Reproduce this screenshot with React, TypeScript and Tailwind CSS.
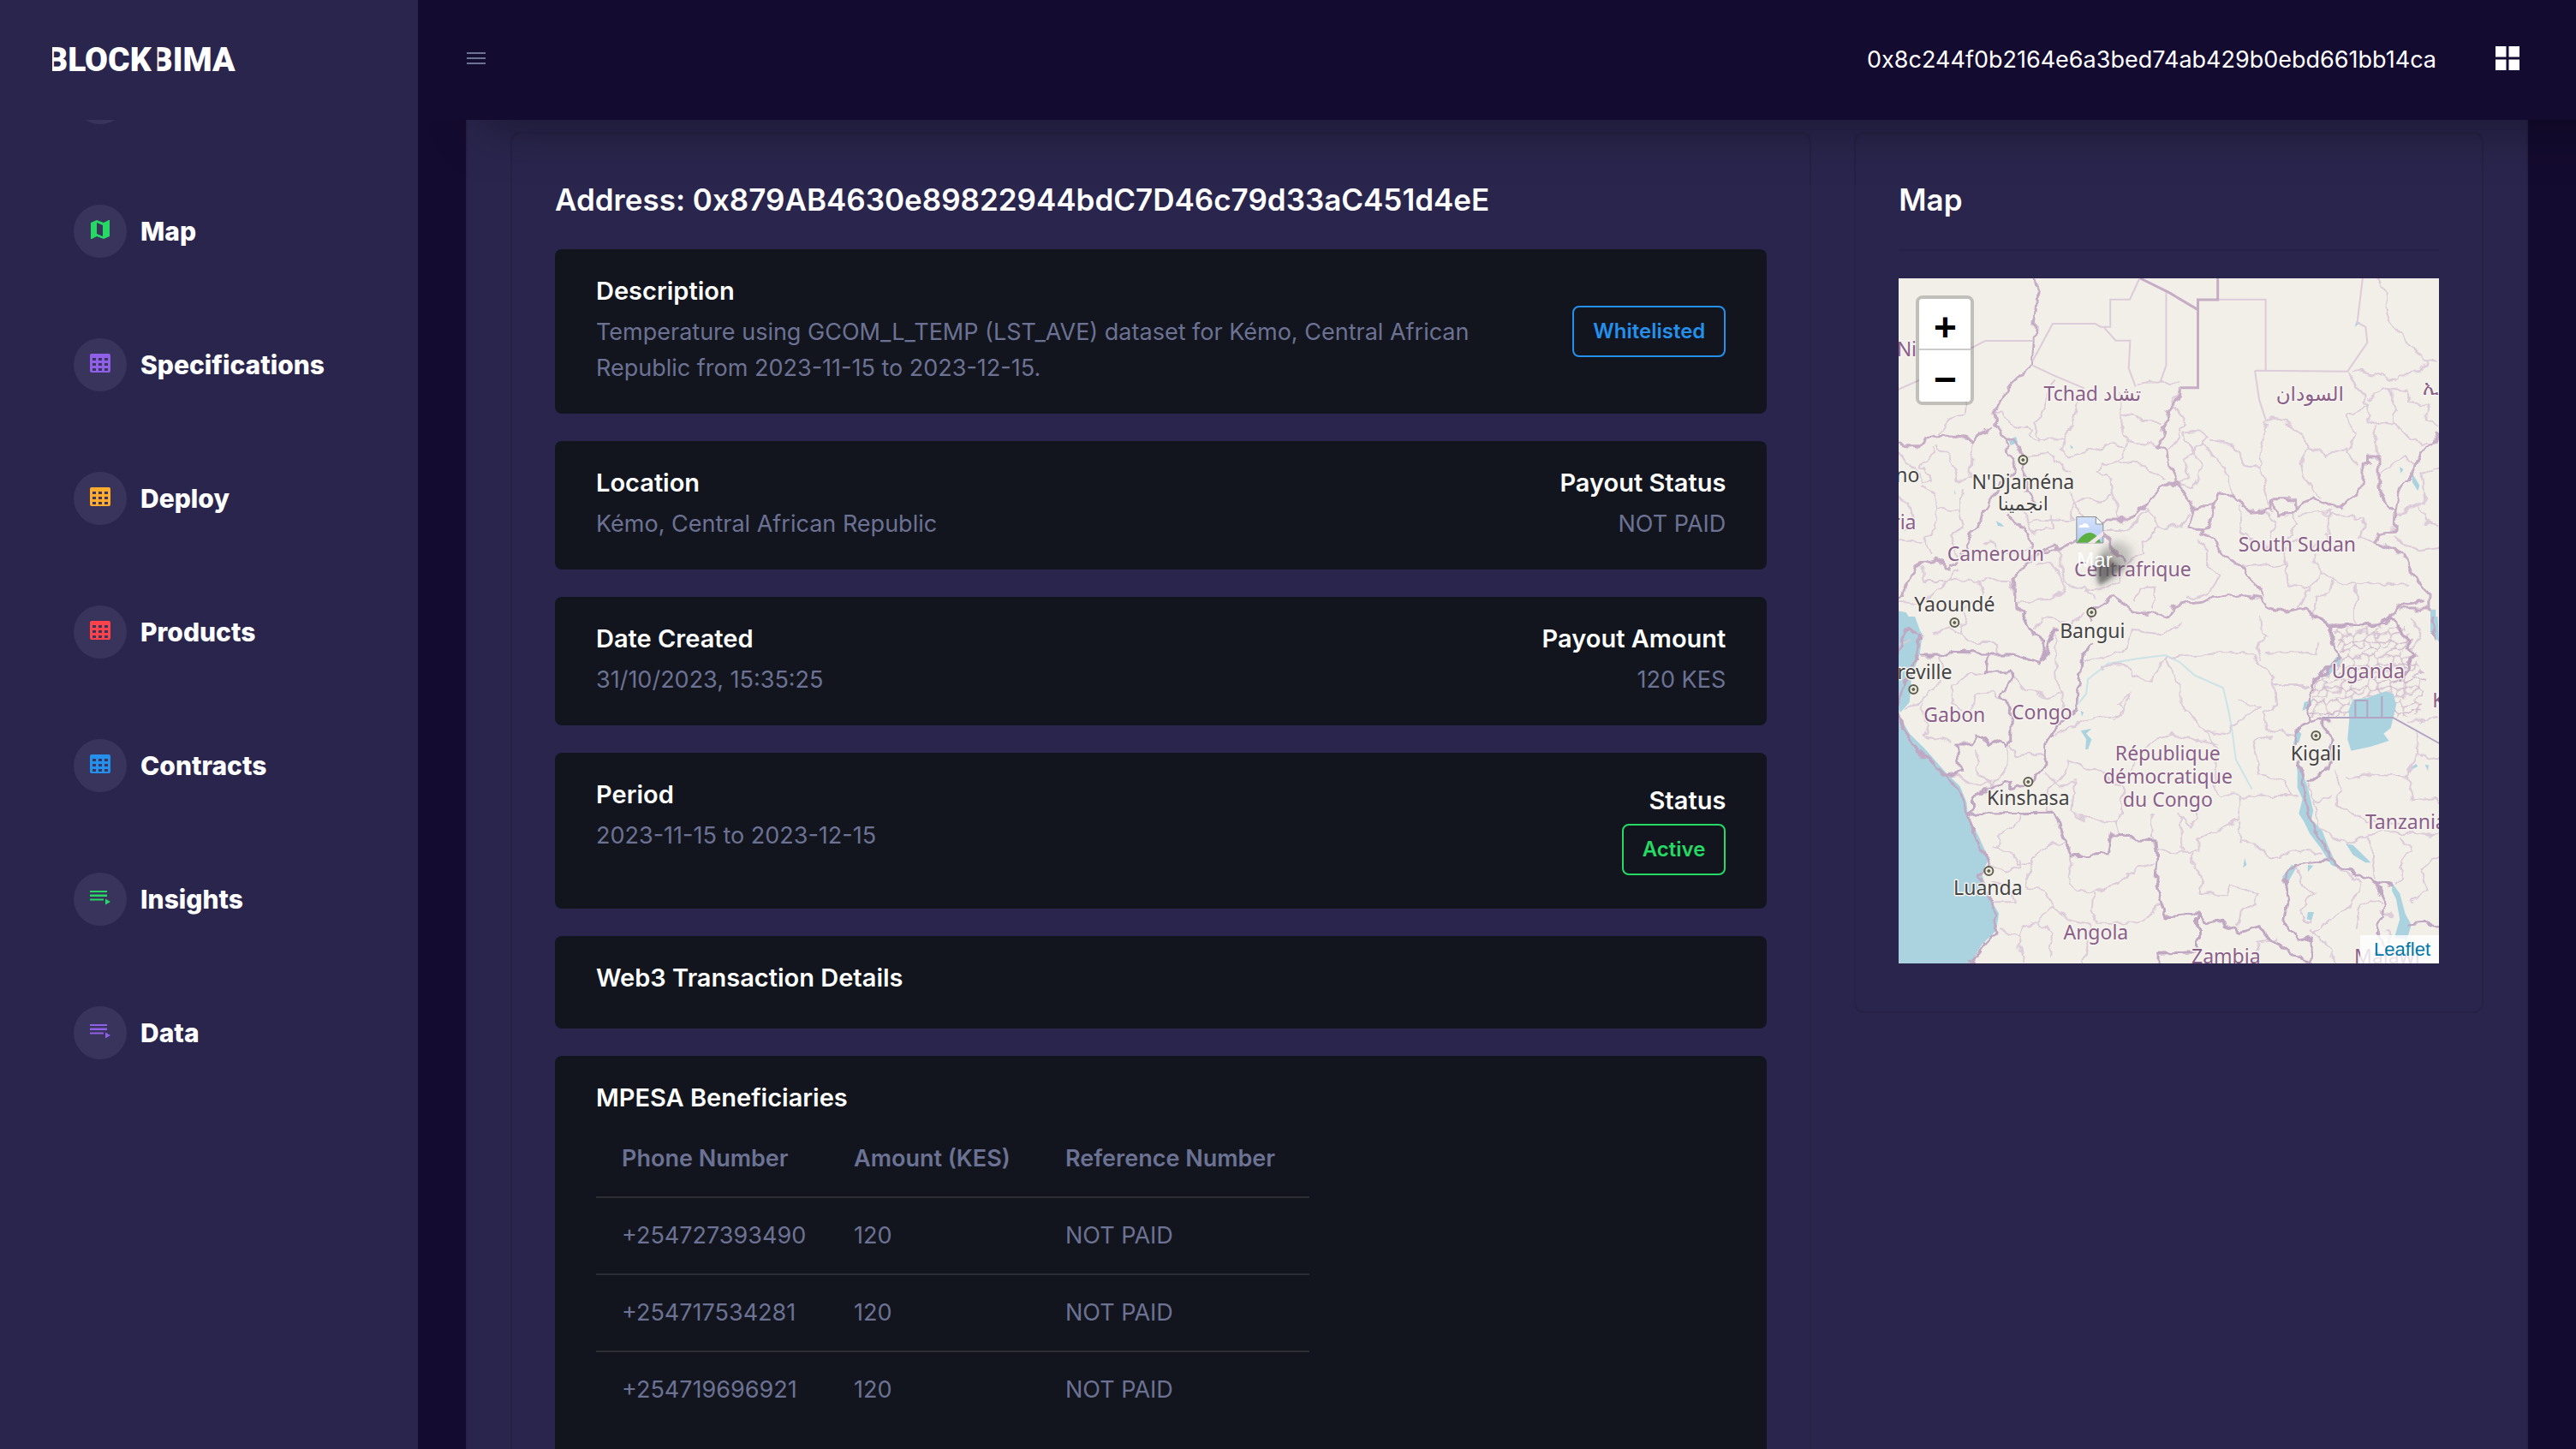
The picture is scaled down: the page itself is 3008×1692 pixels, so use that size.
import React from 'react';

/** Sidebar entries */
const navItems = [
  { label: 'Map', icon: 'map', color: 'text-[#25d964]' },
  { label: 'Specifications', icon: 'table', color: 'text-[#8f5fe8]' },
  { label: 'Deploy', icon: 'table', color: 'text-[#ffab2d]' },
  { label: 'Products', icon: 'table', color: 'text-[#fc424a]' },
  { label: 'Contracts', icon: 'table', color: 'text-[#2490eb]' },
  { label: 'Insights', icon: 'playlist', color: 'text-[#25d964]' },
  { label: 'Data', icon: 'playlist', color: 'text-[#8f5fe8]' },
];

const beneficiaries = [
  { phone: '+254727393490', amount: '120', reference: 'NOT PAID' },
  { phone: '+254717534281', amount: '120', reference: 'NOT PAID' },
  { phone: '+254719696921', amount: '120', reference: 'NOT PAID' },
];

function NavIcon({ name }: { name: string }) {
  if (name === 'map') {
    return (
      <svg viewBox="0 0 24 24" className="mb-1 h-6 w-6" fill="currentColor">
        <path
          fillRule="evenodd"
          d="M1 4 8 1l8 3 6-3h1v19l-7 3-8-3-6 3H1zm7 0v13l7 3V7z"
        />
      </svg>
    );
  }
  if (name === 'table') {
    return (
      <svg viewBox="0 0 24 24" className="mb-1 h-6 w-6" fill="currentColor">
        <path
          fillRule="evenodd"
          d="M2 1h20a2 2 0 0 1 2 2v18a2 2 0 0 1-2 2H2a2 2 0 0 1-2-2V3a2 2 0 0 1 2-2zM3 6v3h4V6zm7 0v3h4V6zm7 0v3h4V6zM3 12v3h4v-3zm7 0v3h4v-3zm7 0v3h4v-3zM3 18v3h4v-3zm7 0v3h4v-3zm7 0v3h4v-3z"
        />
      </svg>
    );
  }
  return (
    <svg viewBox="0 0 24 24" className="mb-1 h-6 w-6" fill="currentColor">
      <path d="M0 4h20v2H0zM0 8.500h20v2.500H0zM0 13.500h16v2H0zM18 13.500l6 3.500-6 3.500z" />
    </svg>
  );
}

function Sidebar() {
  return (
    <aside className="flex w-[488px] shrink-0 flex-col bg-[#2a254d]">
      <div className="flex h-[140px] shrink-0 items-center px-[54px]">
        <a
          href="#home"
          className="font-['Roboto',sans-serif] text-[39px] leading-none font-black text-white"
        >
          <span className="inline-block [clip-path:inset(0_0_0_7px)]">B</span>LOCK
          <span className="inline-block [clip-path:inset(0_0_0_7px)]">B</span>IMA
        </a>
      </div>
      <nav className="flex-1 overflow-hidden">
        <ul className="-mt-[57px] flex flex-col gap-[94px] pl-[86px]">
          <li className="h-[62px]">
            <a
              href="#dashboard"
              aria-label="Dashboard"
              className="block h-[62px] w-[62px] rounded-full bg-[#38345b]"
            />
          </li>
          {navItems.map((item) => (
            <li key={item.label} className="h-[62px]">
              <a href={`#${item.label.toLowerCase()}`} className="flex items-center gap-4">
                <span
                  className={`flex h-[62px] w-[62px] items-center justify-center rounded-full bg-[#38345b] ${item.color}`}
                >
                  <NavIcon name={item.icon} />
                </span>
                <span className="text-[30px] leading-[42px] font-extrabold text-white">
                  {item.label}
                </span>
              </a>
            </li>
          ))}
        </ul>
      </nav>
    </aside>
  );
}

function TopBar() {
  return (
    <header className="relative z-10 flex h-[140px] shrink-0 items-center bg-[#140b30] pr-[66px] pl-[57px] shadow-[75px_10px_60px_rgba(0,0,0,0.35)]">
      <button type="button" aria-label="Toggle menu" className="text-[#6c7293]">
        <svg viewBox="0 0 22 14" className="mb-1 h-[14px] w-[22px]" fill="currentColor">
          <path d="M0 0h22v2H0zM0 6h22v2H0zM0 12h22v2H0z" />
        </svg>
      </button>
      <span className="ml-auto text-[27px] leading-[42px] text-white">
        0x8c244f0b2164e6a3bed74ab429b0ebd661bb14ca
      </span>
      <button type="button" aria-label="Apps" className="ml-[69px] text-white">
        <svg viewBox="0 0 28 28" className="mb-1 h-7 w-7" fill="currentColor">
          <path d="M0 0h12.500v12.500H0zM15.500 0H28v12.500H15.500zM0 15.500h12.500V28H0zM15.500 15.500H28V28H15.500z" />
        </svg>
      </button>
    </header>
  );
}

interface InfoCardProps {
  title: string;
  text?: string;
  children?: React.ReactNode;
}

/** Dark row with a title, its value and an optional right side */
function InfoCard({ title, text, children }: InfoCardProps) {
  return (
    <div className="flex justify-between rounded-lg bg-[#12151e] px-12 py-8">
      <div className="max-w-[1100px]">
        <h6 className="mb-[10px] text-[29px] leading-[34px] font-semibold text-white">{title}</h6>
        {text && <p className="text-[27px] leading-[42px] text-[#6c7293]">{text}</p>}
      </div>
      {children}
    </div>
  );
}

function RightValue({ title, text }: { title: string; text: string }) {
  return (
    <div className="text-right">
      <h6 className="mb-[10px] text-[29px] leading-[34px] font-semibold text-white">{title}</h6>
      <p className="text-[27px] leading-[42px] text-[#6c7293]">{text}</p>
    </div>
  );
}

function BeneficiaryTable() {
  return (
    <table className="text-left text-[27px] leading-[42px] text-[#6c7293]">
      <thead>
        <tr className="border-b-2 border-[#2c2e33]">
          <th className="w-[271px] py-[23px] pr-6 pl-[30px] font-semibold">Phone Number</th>
          <th className="w-[247px] py-[23px] pr-6 pl-[30px] font-semibold">Amount (KES)</th>
          <th className="w-[315px] py-[23px] pr-6 pl-[30px] font-semibold">Reference Number</th>
        </tr>
      </thead>
      <tbody>
        {beneficiaries.map((row) => (
          <tr key={row.phone} className="border-b-2 border-[#2c2e33] last:border-0">
            <td className="py-[23px] pr-6 pl-[30px]">{row.phone}</td>
            <td className="py-[23px] pr-6 pl-[30px]">{row.amount}</td>
            <td className="py-[23px] pr-6 pl-[30px]">{row.reference}</td>
          </tr>
        ))}
      </tbody>
    </table>
  );
}

/* ---- map drawing ---- */

// northern half of the map, in a 1501x1245 grid
const northBorders = [
  'M413 45 415 62 437 95 425 125 418 200 411 345 350 420 320 480 303 518 308 560 335 612 342 660 365 680 360 725 303 800 287 840 270 870 262 910 238 940 228 990 200 1040 185 1068 148 1030 105 1040 60 1105 50 1160 38 1180',
  'M38 620 60 632 98 632 115 608 145 596 190 594 215 600 245 614 265 590 300 570',
  'M335 612 360 612 385 660 390 740 392 790 425 830',
  'M340 870 385 920 410 970 413 1000',
  'M440 1000 470 978 484 995 530 965 610 895 660 893 690 885 750 805 790 762 815 765 855 850 845 915 880 920',
  'M484 995 430 1010 385 1045 358 1100 365 1190 385 1215 415 1300',
  'M855 850 913 842 930 805 970 800 1000 850 1015 862 1075 855 1078 818 1138 818 1140 850 1190 812 1240 845 1270 845 1325 780 1325 695 1345 690 1345 672 1370 672 1370 785 1410 860',
  'M1078 818 1090 872 1130 872 1140 850',
  'M913 842 900 915 880 920 880 940 910 960 940 1010 990 1050 1010 1095 1040 1120 1050 1160',
  'M605 930 640 1000 665 1035',
  'M575 1240 580 1200 630 1163 670 1180 685 1212 735 1220 785 1230 800 1195 880 1180 950 1150 1040 1165 1060 1195 1110 1215 1170 1200 1215 1245 1270 1270 1310 1260 1390 1255 1430 1190 1500 1175',
  'M820 430 815 470 785 510 790 540 770 570 775 600 755 640 785 645 793 710 812 765',
  'M1539 580 1525 630 1490 650 1470 720 1430 780 1418 860 1415 930 1370 940 1360 970 1440 1010 1465 1090 1510 1150 1510 1200 1430 1200',
];

const straightBorders = 'M710 45 790 95 870 155M925 45V120H870V428H820';

const northStraightLines =
  'M38 435 100 400M240 290 280 264H411M411 335 467 204H585L600 215H627V119H681L708 45M610 218 642 263H682L678 360 697 425M782 95V350L765 410M925 119H1058V368M1028 368 1285 371 1340 270 1335 215 1312 200 1327 45M1028 368 1040 470 1058 540M411 350 470 385 555 430';

const northLines = [
  'M1370 45 1390 90 1395 170 1425 240 1500 330 1539 335',
  'M1285 371 1320 440 1340 490 1280 530 1305 590 1285 660 1310 695',
  'M1295 365 1370 385 1425 405 1430 380 1490 375 1505 330',
  'M1340 470 1400 430 1425 500 1410 545 1380 560 1340 540 1340 480',
  'M1400 430 1450 440 1460 480 1510 490 1500 550 1539 560',
  'M1370 680 1360 620 1365 560',
  'M1410 545 1460 610 1525 640',
  'M1058 540 1110 548 1160 590 1180 640 1155 690 1165 750 1215 810',
  'M1180 640 1230 670 1250 650 1285 650',
  'M1058 540 1040 700 1070 840',
  'M1040 705 1000 700 975 640 910 610',
  'M697 425 735 412 820 415',
  'M470 390 445 500 415 550 435 612 500 610 510 570 525 560 540 480',
  'M303 515 325 515 375 570 410 575 400 600 435 615',
  'M38 645 60 690 90 705 105 760 130 755 125 730 105 715 110 690 140 660 135 630',
  'M245 614 240 740 205 760 195 700 180 665 155 650 145 625',
  'M100 770 140 800 150 850 140 930 105 960 130 1010',
  'M150 855 210 858 215 780',
  'M210 858 220 920 185 950 200 1020',
  'M38 810 70 825 80 900 55 930',
  'M38 960 100 970',
  'M658 440 658 550 675 610 760 635',
  'M658 530 685 520 715 545 770 550',
  'M500 610 490 640 515 680 560 650 640 625 665 640 645 690 600 700 590 720 635 745 640 820 650 890',
  'M645 685 720 695 735 720 780 750',
  'M395 665 460 660 500 720 520 725',
  'M665 640 675 615',
  'M820 430 800 480 830 540 820 600 790 640',
  'M815 765 855 780 880 700 830 590',
  'M830 590 860 585 905 595 880 620 940 700 970 800',
  'M885 620 830 680 850 740 812 770',
  'M380 850 395 900 430 890 520 895 520 840 560 810 600 840 640 790',
  'M395 900 410 940 470 920 465 880',
  'M520 800 530 850 560 890',
  'M280 975 300 970 320 1000 385 1005 410 985',
  'M105 1050 110 1110 170 1110 205 1070',
  'M38 1180 100 1190 180 1100 260 1100 350 1105',
  'M265 1105 275 1150 225 1200 215 1290',
  'M350 1105 365 1175 450 1170 490 1150 500 1110 470 1050 430 1040',
  'M484 995 485 1050 510 1120 560 1130 585 1160',
  'M415 1270 440 1230 480 1240 520 1260 560 1220',
  'M730 850 700 900 660 930 610 930',
  'M730 850 765 920 820 910 845 870',
  'M765 920 715 970 720 1010 670 1040',
  'M870 960 900 1000 900 1060 930 1090 900 1150 840 1170',
  'M665 1040 650 1110 630 1130 560 1140',
  'M700 1180 705 1130 750 1130 745 1200',
  'M985 840 990 940 1060 990 1085 900 1060 860',
  'M990 1060 1115 1050 1110 980 1150 900 1135 870',
  'M1150 870 1240 860 1230 940 1180 1000 1150 960 1120 980',
  'M1210 870 1330 880 1320 960 1360 975',
  'M1115 1050 1120 1120 1180 1130 1210 1080 1260 1110 1455 1118',
  'M1210 1080 1190 1020',
  'M1308 1118 1308 1260',
  'M1180 1130 1150 1200',
  'M1250 1110 1240 1150 1200 1160 1190 1240',
  'M1370 740 1410 690 1450 660 1470 710',
  'M1539 700 1490 730 1500 830 1430 870',
  'M1420 870 1480 840 1500 900 1539 910',
  'M1415 950 1480 1000 1539 990',
  'M150 590 180 540 220 520 222 480',
];

// southern half, grid of the same width that starts lower down
const southBorders = [
  'M38 130 60 40 100 65 95 120 60 230 38 310M38 340 70 430 110 490 175 560 215 620 228 690 265 800 290 865 265 905 290 990 312 1050 305 1110 270 1160 240 1215',
  'M100 135 185 135 187 127 290 130 285 195 350 195 355 215 325 270 330 290 352 320 350 430 335 455 320 430 290 450 260 410 247 450 198 450 215 540 175 555',
  'M290 135 360 135 440 165 445 130 470 45 485 45M385-10 400 30 440 90 443 140',
  'M575 90 550 140 540 250 525 330 490 370 470 400 448 440 445 530 405 585 350 605 350 580 310 590 245 630 245 680 228 690',
  'M228 695 280 687 470 685 490 765 520 840 620 830 628 762 685 760 687 782 752 785 757 850 752 930 778 1050 870 1040 895 1070 940 1060 945 1085 990 1105 1040 1085 1060 1125 1100 1150 1140 1190 1185 1205',
  'M870 1040 870 1175 762 1180 762 1215',
  'M1235 850 1140 865 1110 915 1120 1000 1110 1080 1150 1135 1185 1125 1185 1215',
  'M1150 500 1165 600 1175 700 1215 780 1250 870 1300 900 1360 930 1410 945',
  'M1240 35 1235 100 1265 140 1190 230 1175 290 1180 370 1145 400 1140 450',
  'M1195 0 1240 35 1290 30 1350 35 1410 0 1440 70 1465 130 1455 190 1430 230',
  'M1240 360 1215 360 1215 380 1245 430 1225 540 1175 585M1180 375 1215 360',
  'M1360 930 1390 1010 1375 1060 1370 1110 1390 1160M1450 1080 1500 1075 1539 1090',
  'M1515 0 1530 80',
];

const southLines = [
  'M38 100 80 80M130 60 180 40 250 90 310 90 312 130',
  'M160 135 155 230 100 300 60 320',
  'M285 195 240 205 190 240 185 300 220 340',
  'M250 270 300 265 330 290M250 270 240 340',
  'M100 310 120 380 110 420 190 440',
  'M470 45 480 250 500 265 498 340',
  'M355 215 390 250 450 280 500 265',
  'M350 450 370 490 430 480 450 490',
  'M260 470 255 540 300 590 340 520 345 450',
  'M470 415 560 365 620 345 660 350 680 270 650 300 665 330 640 360',
  'M555 155 600 150 670 110 690 50 760 60 830 30',
  'M610 190 610 170 680 175 690 205 740 225 750 200 785 140',
  'M780 150 820 250 820 300 890 400 960 410 970 380 1040 320 985 295',
  'M790 140 930 130 1020 130 1040 170 1060 180 1085 240 1180 240',
  'M1040 0 1045 60 1065 70 1030 100 1040 150',
  'M1060 130 1130 120 1200 130 1210 90',
  'M890 400 920 470 920 610 935 625 1150 628',
  'M920 450 800 410 760 420 700 480 690 540',
  'M1085 240 1090 310 1050 340 1060 400 1140 410',
  'M1075 420 1025 435 1040 545 1110 580 1130 625',
  'M510 505 600 545 660 590 660 690 640 720 650 760',
  'M445 550 490 590 530 580 520 680 560 710 640 715',
  'M510 505 500 550 480 580 450 610 450 680',
  'M190 550 250 595 300 580',
  'M745 690 740 770 755 820 850 825 870 830 870 780 940 740 980 710 990 628',
  'M820 690 825 820M820 700 850 740 875 700 870 680',
  'M980 720 990 790 1030 800 1080 850 1130 820 1210 830',
  'M855 830 855 880 880 910 875 970 950 970 960 940 1035 970 1030 1010 990 1030 980 1090',
  'M380 690 375 720 320 760 325 810 310 820',
  'M300 815 360 825 370 870 410 860 430 820 470 800 500 790',
  'M290 870 340 900 380 880 375 850',
  'M410 860 390 950 440 960 470 1020 520 1060 570 1080',
  'M300 1000 360 1000 350 950 300 930',
  'M520 845 510 930 560 970 600 960 660 930 700 880 750 865',
  'M580 970 575 1030 590 1070 700 1070 745 1050 750 1015 775 1010',
  'M470 1020 430 1050 435 1080 465 1110 460 1200',
  'M320 1090 375 1120 385 1090 430 1075',
  'M380 1110 375 1160 390 1215M570 1080 550 1215',
  'M1140 870 1165 940 1190 970 1150 1030 1190 1080',
  'M1255 880 1320 930 1300 1000 1240 1060 1190 1110',
  'M1310 1100 1320 1020 1350 990 1380 1010',
  'M1030 1140 1090 1130M1020 1215 1040 1140',
  'M1185 1100 1240 1160 1250 1215',
  'M1245 540 1270 600 1255 660 1320 700 1340 720 1440 730',
  'M1175 590 1195 650 1240 640M1190 650 1210 740 1230 760',
  'M1230 760 1280 800 1350 760 1450 755 1539 770',
  'M1350 760 1355 860 1360 920',
  'M1430 770 1460 820 1430 880 1440 920 1420 940',
  'M1539 840 1490 890 1510 960 1460 1000',
  'M1280 570 1360 550 1450 560 1480 480 1475 400',
  'M1450 560 1470 640 1530 630 1539 660',
  'M1480 480 1539 500M1460 370 1539 350',
  'M1460 130 1490 60 1460 0',
  'M1370 1040 1410 1045M1390 1100 1410 1170',
];

const northWater =
  'M345 610 365 600 370 620 350 630zM310 895 325 905 332 915 315 912zM1310 195 1320 200 1305 215zM1430 705 1440 715 1432 728zM1465 730 1485 770 1480 790 1465 760zM515 628 525 638 518 642zM195 785 198 800 194 800zM38 1210 60 1215 75 1245 105 1290H38zM1515 1205H1530V1290H1515z';

const southWater = [
  'M38 0H85L105 70 98 130 75 215 70 300 45 335 38 325z',
  'M38 340 70 410 110 460 170 545 210 595 228 650 232 700 262 770 290 850 270 900 290 980 318 1040 310 1100 270 1150 240 1215H38z',
  'M1300 290 1340 285 1390 262 1412 270 1420 310 1405 390 1385 410 1400 435 1350 455 1295 470 1285 430 1290 360 1288 330z',
  'M1146 500 1158 540 1175 600 1190 680 1185 710 1215 750 1230 800 1258 880 1240 870 1210 810 1180 760 1165 720 1150 690 1160 640 1146 600z',
  'M1410 935 1430 970 1445 1040 1462 1080 1450 1130 1415 1125 1430 1060 1420 990 1408 960z',
  'M1280 795 1300 800 1350 862 1335 862 1300 835z',
  'M1255 140 1270 140 1262 165 1232 208 1222 210 1230 180z',
  'M1145 395 1157 410 1150 440 1134 450 1140 420z',
  'M1165 300 1188 292 1175 320 1160 330z',
  'M1130 870 1145 875 1120 930 1105 935 1105 910z',
  'M1175 870 1190 872 1175 895zM1175 1035 1192 1035 1185 1065 1172 1060z',
  'M545 400 575 392 560 410 575 430 565 465 558 465 560 430z',
  'M545 330 553 335 548 350zM1000 845 1005 870 995 880zM1500 520 1510 520 1508 540zM1455 540 1475 515 1480 525z',
  'M1515 0 1535 0 1539 90 1522 60z',
];

const countries = [
  { name: 'Tchad تشاد', x: 227, y: 143 },
  { name: 'السودان', x: 481, y: 143 },
  { name: 'Cameroun', x: 114, y: 330 },
  { name: 'Centrafrique', x: 274, y: 348 },
  { name: 'South Sudan', x: 466, y: 319 },
  { name: 'Gabon', x: 66, y: 518 },
  { name: 'Congo', x: 168, y: 515 },
  { name: 'Uganda', x: 549, y: 467 },
  { name: 'République', x: 315, y: 563 },
  { name: 'démocratique', x: 315, y: 590 },
  { name: 'du Congo', x: 315, y: 617 },
  { name: 'Tanzania', x: 593, y: 643 },
  { name: 'Angola', x: 231, y: 772 },
  { name: 'Zambia', x: 383, y: 800 },
  { name: 'Malawi', x: 571, y: 800 },
  { name: 'Ni', x: 10, y: 91 },
  { name: 'ria', x: 7, y: 293 },
  { name: 'Kenya', x: 657, y: 501 },
  { name: 'ኢ', x: 622, y: 135 },
];

const cities = [
  { name: "N'Djaména", x: 146, y: 246, dotX: 146, dotY: 212 },
  { name: 'Yaoundé', x: 66, y: 389, dotX: 66, dotY: 402 },
  { name: 'Bangui', x: 227, y: 420, dotX: 226, dotY: 390 },
  { name: 'Libreville', x: 15, y: 468, dotX: 18, dotY: 480 },
  { name: 'Kigali', x: 488, y: 563, dotX: 488, dotY: 534 },
  { name: 'Kinshasa', x: 152, y: 615, dotX: 152, dotY: 588 },
  { name: 'Luanda', x: 105, y: 720, dotX: 106, dotY: 692 },
];

const line = { vectorEffect: 'non-scaling-stroke' as const };

function AfricaMap() {
  return (
    <svg
      viewBox="0 0 632 800"
      preserveAspectRatio="xMidYMid slice"
      className="block h-full w-full bg-[#f2efe9]"
      role="img"
      aria-label="Map of Central Africa"
    >
      <defs>
        <filter
          id="rough"
          x="0"
          y="0"
          width="632"
          height="800"
          filterUnits="userSpaceOnUse"
          colorInterpolationFilters="sRGB"
        >
          <feTurbulence type="fractalNoise" baseFrequency="0.07" numOctaves="2" seed="4" />
          <feDisplacementMap
            in="SourceGraphic"
            scale="12"
            xChannelSelector="R"
            yChannelSelector="G"
          />
        </filter>
        <filter id="soft" x="-50%" y="-50%" width="200%" height="200%">
          <feGaussianBlur stdDeviation="5" />
        </filter>
        <filter id="softTip" x="-50%" y="-50%" width="200%" height="200%">
          <feGaussianBlur stdDeviation="2" />
        </filter>
        <linearGradient id="sky" x1="0" y1="0" x2="0" y2="1">
          <stop offset="0" stopColor="#d3e1fb" />
          <stop offset="1" stopColor="#b4caf3" />
        </linearGradient>
        <linearGradient id="shade" x1="0" y1="1" x2="1" y2="0">
          <stop offset="0" stopColor="#555" stopOpacity="0.8" />
          <stop offset="1" stopColor="#555" stopOpacity="0.1" />
        </linearGradient>
        <pattern
          id="districts"
          width="46"
          height="42"
          patternUnits="userSpaceOnUse"
          patternTransform="scale(.65)"
        >
          <path
            d="M0 8 9 4 16 10 27 6 34 12 46 8M9 4 6 0M16 10 13 20 0 24M13 20 22 26 34 22 34 12M34 22 46 24M22 26 20 36 8 42M20 36 32 38 38 30 34 22M32 38 34 42M0 34 9 30 13 20M38 30 46 34M27 6 29 0"
            fill="none"
            stroke="#cdb5ca"
            strokeWidth="2"
          />
        </pattern>
      </defs>

      {/* districts of Uganda, under the lake */}
      <path
        d="M506 410 545 405 590 402 602 430 616 470 608 512 480 512 484 470 518 440z"
        fill="url(#districts)"
        filter="url(#rough)"
      />

      {/* water */}
      <g fill="#aad3df">
        <path transform="scale(.4209 .3333) translate(-38 -45)" d={northWater} />
        <g transform="translate(0 395) scale(.4209 .3333) translate(-38 0)">
          {southWater.map((d) => (
            <path key={d} d={d} />
          ))}
          <path
            d="M535 310 560 270 565 220 620 165 700 148 780 135 820 160 860 205 940 250 955 330 965 400 975 500 1020 605"
            fill="none"
            stroke="#cbe3e6"
            strokeWidth="2"
            {...line}
          />
        </g>
      </g>

      {/* borders */}
      <g fill="none" filter="url(#rough)" strokeLinejoin="round">
        <g transform="scale(.4209 .3333) translate(-38 -45)">
          {northLines.map((d) => (
            <path key={d} d={d} stroke="#dccbd8" strokeWidth="2" {...line} />
          ))}
          {northBorders.map((d) => (
            <path key={d} d={d} stroke="#c6adc5" strokeWidth="3" {...line} />
          ))}
        </g>
        <g transform="translate(0 395) scale(.4209 .3333) translate(-38 0)">
          {southLines.map((d) => (
            <path key={d} d={d} stroke="#dccbd8" strokeWidth="2" {...line} />
          ))}
          {southBorders.map((d) => (
            <path key={d} d={d} stroke="#c0a7c2" strokeWidth="3" {...line} />
          ))}
        </g>
      </g>
      <g fill="none">
        <g transform="scale(.4209 .3333) translate(-38 -45)">
          <path d={northStraightLines} stroke="#dccbd8" strokeWidth="2" {...line} />
          <path d={straightBorders} stroke="#c6adc5" strokeWidth="3" {...line} />
        </g>
        <path
          d="M495 513H578L632 543M534 513V493H548V513M565 488V513"
          stroke="#b3a4c4"
          strokeWidth="2"
        />
      </g>

      {/* labels */}
      <g
        fontFamily="'Noto Sans','DejaVu Sans',sans-serif"
        textAnchor="middle"
        stroke="#f7f4f0"
        strokeWidth="3"
        strokeLinejoin="round"
        paintOrder="stroke"
      >
        {countries.map((c) => (
          <text key={c.name} x={c.x} y={c.y} fontSize="23" fill="#8a6089">
            {c.name}
          </text>
        ))}
        {cities.map((c) => (
          <text key={c.name} x={c.x} y={c.y} fontSize="23" fill="#444444">
            {c.name}
          </text>
        ))}
        <text x="146" y="271" fontSize="22" fill="#444444">
          انجمينا
        </text>
        <text x="11" y="238" fontSize="23" fill="#444444">
          no
        </text>
      </g>
      {cities.map((c) => (
        <g key={c.name} stroke="#5f5f52">
          <circle cx={c.dotX} cy={c.dotY} r="5" fill="#efece0" strokeWidth="2" />
          <circle cx={c.dotX} cy={c.dotY} r="1.500" fill="#5f5f52" />
        </g>
      ))}

      {/* marker with its shadow */}
      <path
        d="M235 358 232 335 238 318 256 306 274 312 274 330 258 345z"
        fill="url(#shade)"
        filter="url(#soft)"
      />
      <path d="M235 359 231 334 240 324 262 338z" fill="#555" opacity="0.5" filter="url(#softTip)" />
      <g transform="translate(208 278)">
        <path d="M.5.5H23L31.500 9v22H.5z" fill="url(#sky)" stroke="#8f8f8f" />
        <path d="M3 13a3 3 0 0 1 4-3 4 4 0 0 1 7 0 3 3 0 0 1 1 3z" fill="#fff" />
        <path d="M1 30.500C5 23 11 19 16 19s9 4 13 11.500z" fill="#5cb043" />
        <path d="M23 .5V9h8.500z" fill="#fff" stroke="#8f8f8f" />
        <path d="M13 31.500 32 17v5L21 31.500z" fill="#f2e6ea" />
      </g>
      <text x="209" y="337" fontSize="24" fill="#fff" fontFamily="'Liberation Sans',sans-serif">
        Mar
      </text>
    </svg>
  );
}

function MapView() {
  return (
    <div className="relative h-[800px] overflow-hidden">
      <AfricaMap />
      <div className="absolute top-5 left-5 rounded-lg border-4 border-black/20 bg-clip-padding font-['Liberation_Sans',sans-serif] text-[46px] font-bold text-black">
        <button
          type="button"
          aria-label="Zoom in"
          className="flex h-[60px] w-[60px] items-center justify-center rounded-t border-b-2 border-[#cccccc] bg-white pt-2 leading-none"
        >
          +
        </button>
        <button
          type="button"
          aria-label="Zoom out"
          className="flex h-[60px] w-[60px] items-center justify-center rounded-b bg-white pt-2 leading-none"
        >
          −
        </button>
      </div>
      <div className="absolute right-0 bottom-0 bg-white/80 pr-[10px] pl-4 font-['Liberation_Sans',sans-serif] text-[22px] leading-[33px]">
        <a href="#leaflet" className="text-[#0078a8]">
          Leaflet
        </a>
      </div>
    </div>
  );
}

export default function App() {
  return (
    <div className="flex h-screen overflow-hidden bg-[#140b30] font-['Inter',sans-serif]">
      <Sidebar />
      <div className="flex min-w-0 flex-1 flex-col">
        <TopBar />
        <main className="flex-1 overflow-hidden px-14">
          <div className="grid min-h-full grid-cols-3 items-start gap-[50px] border-x-2 border-[#262145] bg-[#2a254d] px-[50px] pt-[14px]">
            <section className="col-span-2 rounded-xl border-2 border-[#262145] p-[50px]">
              <h4 className="mb-[31px] text-[35px] leading-[54px] font-semibold text-white">
                Address: 0x879AB4630e89822944bdC7D46c79d33aC451d4eE
              </h4>
              <div className="flex flex-col gap-8">
                <InfoCard
                  title="Description"
                  text="Temperature using GCOM_L_TEMP (LST_AVE) dataset for Kémo, Central African Republic from 2023-11-15 to 2023-12-15."
                >
                  <button
                    type="button"
                    className="h-[60px] self-center rounded-lg border-2 border-[#2490eb] px-[22px] text-[24px] font-semibold text-[#2490eb]"
                  >
                    Whitelisted
                  </button>
                </InfoCard>
                <InfoCard title="Location" text="Kémo, Central African Republic">
                  <RightValue title="Payout Status" text="NOT PAID" />
                </InfoCard>
                <InfoCard title="Date Created" text="31/10/2023, 15:35:25">
                  <RightValue title="Payout Amount" text="120 KES" />
                </InfoCard>
                <InfoCard title="Period" text="2023-11-15 to 2023-12-15">
                  <div className="flex flex-col items-end py-[7px]">
                    <h6 className="mb-[10px] text-[29px] leading-[34px] font-semibold text-white">
                      Status
                    </h6>
                    <button
                      type="button"
                      className="h-[60px] rounded-lg border-2 border-[#25d964] px-[22px] text-[24px] font-semibold text-[#25d964]"
                    >
                      Active
                    </button>
                  </div>
                </InfoCard>
                <InfoCard title="Web3 Transaction Details" />
                <div className="rounded-lg bg-[#12151e] px-12 py-8">
                  <h6 className="mb-[10px] text-[29px] leading-[34px] font-semibold text-white">
                    MPESA Beneficiaries
                  </h6>
                  <BeneficiaryTable />
                </div>
              </div>
            </section>

            <section className="rounded-xl border-2 border-[#262145] px-[50px] pt-[50px] pb-14">
              <h4 className="text-[35px] leading-[54px] font-semibold text-white">Map</h4>
              <hr className="mt-[31px] mb-8 border-t-2 border-[#262145]" />
              <MapView />
            </section>
          </div>
        </main>
      </div>
    </div>
  );
}
